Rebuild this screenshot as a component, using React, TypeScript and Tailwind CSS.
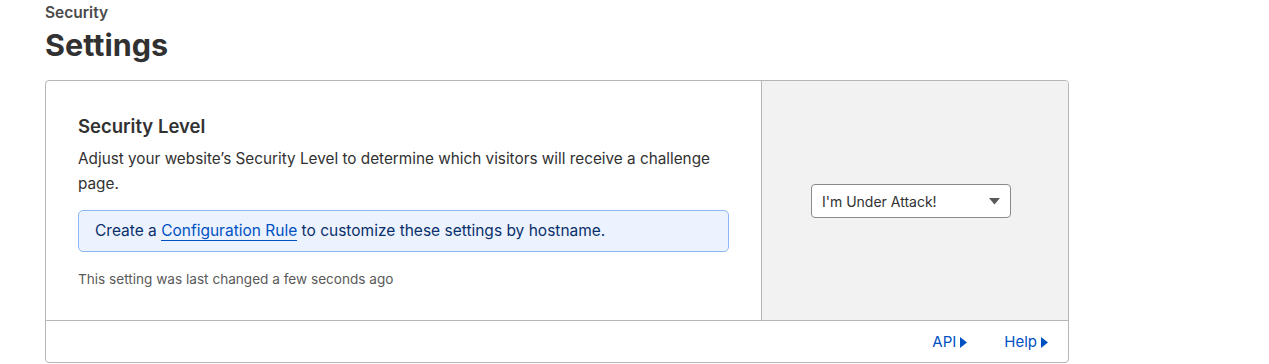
export default function App() {
  return (
    <div className="min-h-[364px] bg-white text-[#313131]" style={{ fontFamily: 'Inter, "Noto Sans", sans-serif' }}>
      <div className="ml-[45px] w-[1024px] pt-[4px]">
        <div className="text-[15.5px] font-semibold leading-[18px] text-[#4a4a4a]">Security</div>
        <h1 className="mt-[6px] text-[30.5px] font-bold leading-[34px] text-[#313131]">Settings</h1>
        <div className="mt-[18px] overflow-hidden rounded-[4px] border border-[#b6b6b6]">
          <div className="flex h-[240px] border-b border-[#b6b6b6]">
            <div className="flex-1 pl-[32px] pr-[32px] pt-[33px]">
              <h2 className="text-[18.5px] font-semibold leading-[24px] text-[#313131]">Security Level</h2>
              <p className="mt-[8px] text-[15.3px] leading-[25px] text-[#313131]">
                Adjust your website’s Security Level to determine which visitors will receive a challenge page.
              </p>
              <div className="mt-[14px] flex h-[42px] w-[651px] items-center rounded-[5px] border border-[#8db6f5] bg-[#ecf3fe] px-[16px] text-[15.5px] text-[#0a2f6b]">
                Create a&nbsp;
                <span className="border-b border-[#0051c3] leading-[18px] text-[#0051c3]">Configuration Rule</span>
                &nbsp;to customize these settings by hostname.
              </div>
              <p className="mt-[18px] text-[13.6px] leading-[18px] text-[#595959]">This setting was last changed a few seconds ago</p>
            </div>
            <div className="flex w-[307px] items-center justify-center border-l border-[#b6b6b6] bg-[#f2f2f2] pt-[1px] pr-[8px]">
              <div className="flex h-[34px] w-[200px] items-center justify-between rounded-[4px] border border-[#8a8a8a] bg-white pl-[10px] pr-[10px] text-[14px] text-[#313131]">
                <span>I'm Under Attack!</span>
                <svg width="11" height="7" viewBox="0 0 11 7"><path d="M0 0h11L5.5 6.5z" fill="#595959" /></svg>
              </div>
            </div>
          </div>
          <div className="flex h-[41px] items-center justify-end gap-[37px] pr-[20px] pt-[2px] text-[15px] text-[#0051c3]">
            <span className="flex items-center gap-[4px]">API<svg width="7" height="11" viewBox="0 0 7 11"><path d="M0 0v11l7-5.5z" fill="#0051c3" /></svg></span>
            <span className="flex items-center gap-[4px]">Help<svg width="7" height="11" viewBox="0 0 7 11"><path d="M0 0v11l7-5.5z" fill="#0051c3" /></svg></span>
          </div>
        </div>
      </div>
    </div>
  );
}
